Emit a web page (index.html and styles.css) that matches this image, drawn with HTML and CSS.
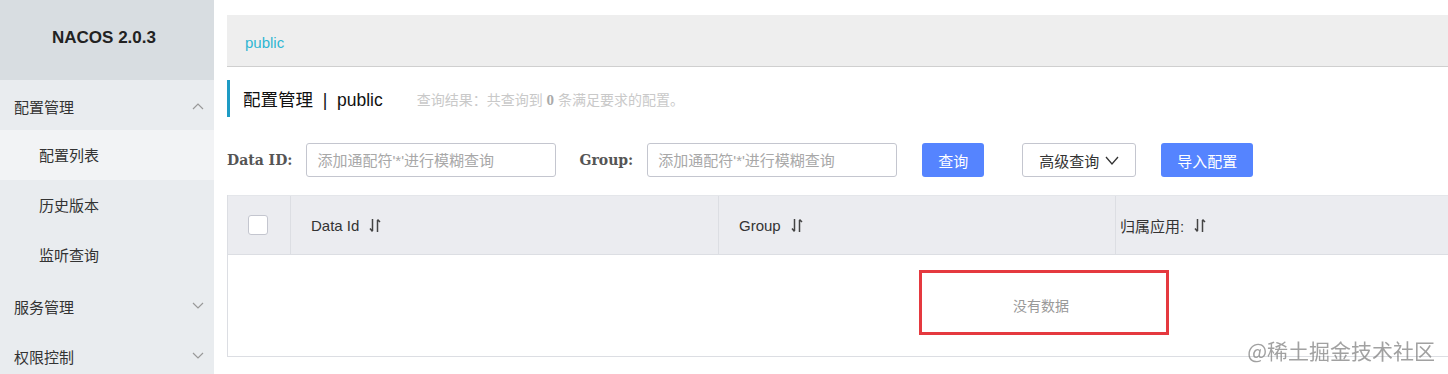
FILE: index.html
```html
<!DOCTYPE html>
<html lang="zh-CN">
<head>
    <meta charset="UTF-8">
    <meta name="viewport" content="width=device-width, initial-scale=1.0">
    <title>Nacos</title>
    <link rel="stylesheet" href="styles.css">
</head>
<body>
    <div class="layout">
        <div class="sidebar">
            <div class="brand">NACOS 2.0.3</div>
            <div class="menu-group">
                <span>配置管理</span>
                <svg class="arrow" width="12" height="8" viewBox="0 0 12 8"><path d="M1 7 L6 2 L11 7" fill="none" stroke="#999" stroke-width="1.2"/></svg>
            </div>
            <div class="menu-item active">配置列表</div>
            <div class="menu-item">历史版本</div>
            <div class="menu-item">监听查询</div>
            <div class="menu-group">
                <span>服务管理</span>
                <svg class="arrow" width="12" height="8" viewBox="0 0 12 8"><path d="M1 1 L6 6 L11 1" fill="none" stroke="#999" stroke-width="1.2"/></svg>
            </div>
            <div class="menu-group">
                <span>权限控制</span>
                <svg class="arrow" width="12" height="8" viewBox="0 0 12 8"><path d="M1 1 L6 6 L11 1" fill="none" stroke="#999" stroke-width="1.2"/></svg>
            </div>
        </div>

        <div class="main">
            <div class="namespace-bar">
                <span class="namespace">public</span>
            </div>

            <div class="page-title">
                <span class="title-text">配置管理 &nbsp;|&nbsp; public</span>
                <span class="title-hint">查询结果：共查询到 <b>0</b> 条满足要求的配置。</span>
            </div>

            <div class="search-row">
                <label class="search-label">Data ID:</label>
                <input class="search-input" type="text" placeholder="添加通配符'*'进行模糊查询">
                <label class="search-label group-label">Group:</label>
                <input class="search-input" type="text" placeholder="添加通配符'*'进行模糊查询">
                <button class="btn btn-primary btn-query">查询</button>
                <button class="btn btn-normal">高级查询
                    <svg width="14" height="9" viewBox="0 0 14 9"><path d="M1 1 L7 8 L13 1" fill="none" stroke="#333" stroke-width="1.3"/></svg>
                </button>
                <button class="btn btn-primary">导入配置</button>
            </div>

            <div class="table">
                <div class="table-head">
                    <div class="cell cell-check"><span class="checkbox"></span></div>
                    <div class="cell cell-id">Data Id
                        <svg class="sort" width="12" height="15" viewBox="0 0 12 15"><path d="M3.5 1 V13 M1 10.5 L3.5 13.5 M8.5 14 V2 M8.5 1.5 L11 4" fill="none" stroke="#444" stroke-width="1.5"/></svg>
                    </div>
                    <div class="cell cell-group">Group
                        <svg class="sort" width="12" height="15" viewBox="0 0 12 15"><path d="M3.5 1 V13 M1 10.5 L3.5 13.5 M8.5 14 V2 M8.5 1.5 L11 4" fill="none" stroke="#444" stroke-width="1.5"/></svg>
                    </div>
                    <div class="cell cell-app">归属应用:
                        <svg class="sort" width="12" height="15" viewBox="0 0 12 15"><path d="M3.5 1 V13 M1 10.5 L3.5 13.5 M8.5 14 V2 M8.5 1.5 L11 4" fill="none" stroke="#444" stroke-width="1.5"/></svg>
                    </div>
                </div>
                <div class="table-body">
                    <span class="empty">没有数据</span>
                    <div class="mark"></div>
                </div>
            </div>
        </div>
    </div>

    <div class="watermark">@稀土掘金技术社区</div>
</body>
</html>
```

FILE: styles.css
```css
body {
    margin: 0;
    padding: 0;
    font-family: "Liberation Sans", "Noto Sans CJK SC", sans-serif;
    font-size: 15px;
    color: #333;
    background-color: #fff;
    overflow: hidden;
}
.layout {
    display: flex;
    height: 374px;
}
.sidebar {
    width: 214px;
    flex-shrink: 0;
    background-color: #e9ecef;
}
.brand {
    height: 80px;
    line-height: 76px;
    text-align: center;
    font-size: 17px;
    font-weight: bold;
    color: #222;
    background-color: #d8dde1;
    padding-right: 6px;
}
.menu-group {
    height: 50px;
    display: flex;
    align-items: center;
    justify-content: space-between;
    padding: 2px 10px 0 14px;
    box-sizing: border-box;
    color: #333;
}
.menu-item {
    height: 50px;
    line-height: 52px;
    padding-left: 39px;
    color: #333;
}
.menu-item.active {
    background-color: #f2f3f5;
}
.main {
    flex: 1;
    padding: 15px 0 0 13px;
    overflow: hidden;
}
.namespace-bar {
    height: 51px;
    display: flex;
    align-items: center;
    padding-left: 18px;
    background-color: #eeeeee;
    border-bottom: 1px solid #cfcfcf;
}
.namespace {
    color: #2fb6d3;
    font-size: 15px;
    padding-top: 4px;
}
.page-title {
    margin-top: 13px;
    height: 37px;
    display: flex;
    align-items: center;
    border-left: 3px solid #1e9bc4;
    padding-left: 13px;
}
.title-text {
    font-size: 17.5px;
    color: #111;
}
.title-hint {
    margin-left: 34px;
    font-size: 14px;
    color: #c9c9c9;
}
.title-hint b {
    color: #aaa;
    font-family: "Liberation Serif", serif;
    font-size: 15px;
}
.search-row {
    margin-top: 26px;
    display: flex;
    align-items: center;
}
.search-label {
    font-family: "DejaVu Serif", serif;
    font-weight: bold;
    font-size: 14px;
    color: #555;
    margin-right: 14px;
}
.group-label {
    margin-left: 23px;
}
.search-input {
    width: 250px;
    height: 34px;
    box-sizing: border-box;
    border: 1px solid #c4c6cf;
    border-radius: 3px;
    padding: 0 10px;
    font-family: "Liberation Sans", "Noto Sans CJK SC", sans-serif;
    font-size: 15px;
    outline: none;
}
.search-input::placeholder {
    color: #a8a8a8;
}
.btn {
    height: 34px;
    box-sizing: border-box;
    border-radius: 3px;
    font-family: "Liberation Sans", "Noto Sans CJK SC", sans-serif;
    font-size: 15px;
    cursor: pointer;
    display: flex;
    align-items: center;
    gap: 6px;
}
.btn-primary {
    background-color: #5584ff;
    border: none;
    color: #fff;
    padding: 0 16px;
}
.btn-normal {
    background-color: #fff;
    border: 1px solid #c4c6cf;
    color: #333;
    padding: 0 16px;
    width: 114px;
    margin: 0 25px 0 38px;
}
.btn-query {
    margin-left: 25px;
}
.table {
    margin-top: 18px;
    width: 1626px;
    border-left: 1px solid #dcdee3;
    border-bottom: 1px solid #dcdee3;
}
.table-head {
    display: flex;
    height: 60px;
    background-color: #ebecf0;
    border-top: 1px solid #e4e6ea;
    border-bottom: 1px solid #dcdee3;
    box-sizing: border-box;
}
.cell {
    display: flex;
    align-items: center;
    gap: 10px;
    padding-left: 20px;
    border-right: 1px solid #dcdee3;
    font-size: 15px;
    color: #333;
    box-sizing: border-box;
}
.cell-check {
    width: 63px;
    padding-left: 20px;
}
.cell-id {
    width: 428px;
}
.cell-group {
    width: 397px;
}
.cell-app {
    flex: 1;
    padding-left: 4px;
    border-right: none;
}
.checkbox {
    width: 18px;
    height: 18px;
    background-color: #fff;
    border: 1px solid #c4c6cf;
    border-radius: 3px;
}
.sort {
    margin-top: 1px;
}
.table-body {
    position: relative;
    height: 101px;
    display: flex;
    align-items: center;
    justify-content: center;
}
.empty {
    color: #999;
    font-size: 14px;
    margin-bottom: 2px;
}
.mark {
    position: absolute;
    left: 691px;
    top: 15px;
    width: 250px;
    height: 65px;
    box-sizing: border-box;
    border: 3px solid #e5393f;
}
.watermark {
    position: fixed;
    right: 13px;
    bottom: 13px;
    font-size: 21px;
    line-height: 1;
    color: rgba(130, 130, 130, 0.75);
    font-family: "Noto Sans CJK SC", sans-serif;
}
```
